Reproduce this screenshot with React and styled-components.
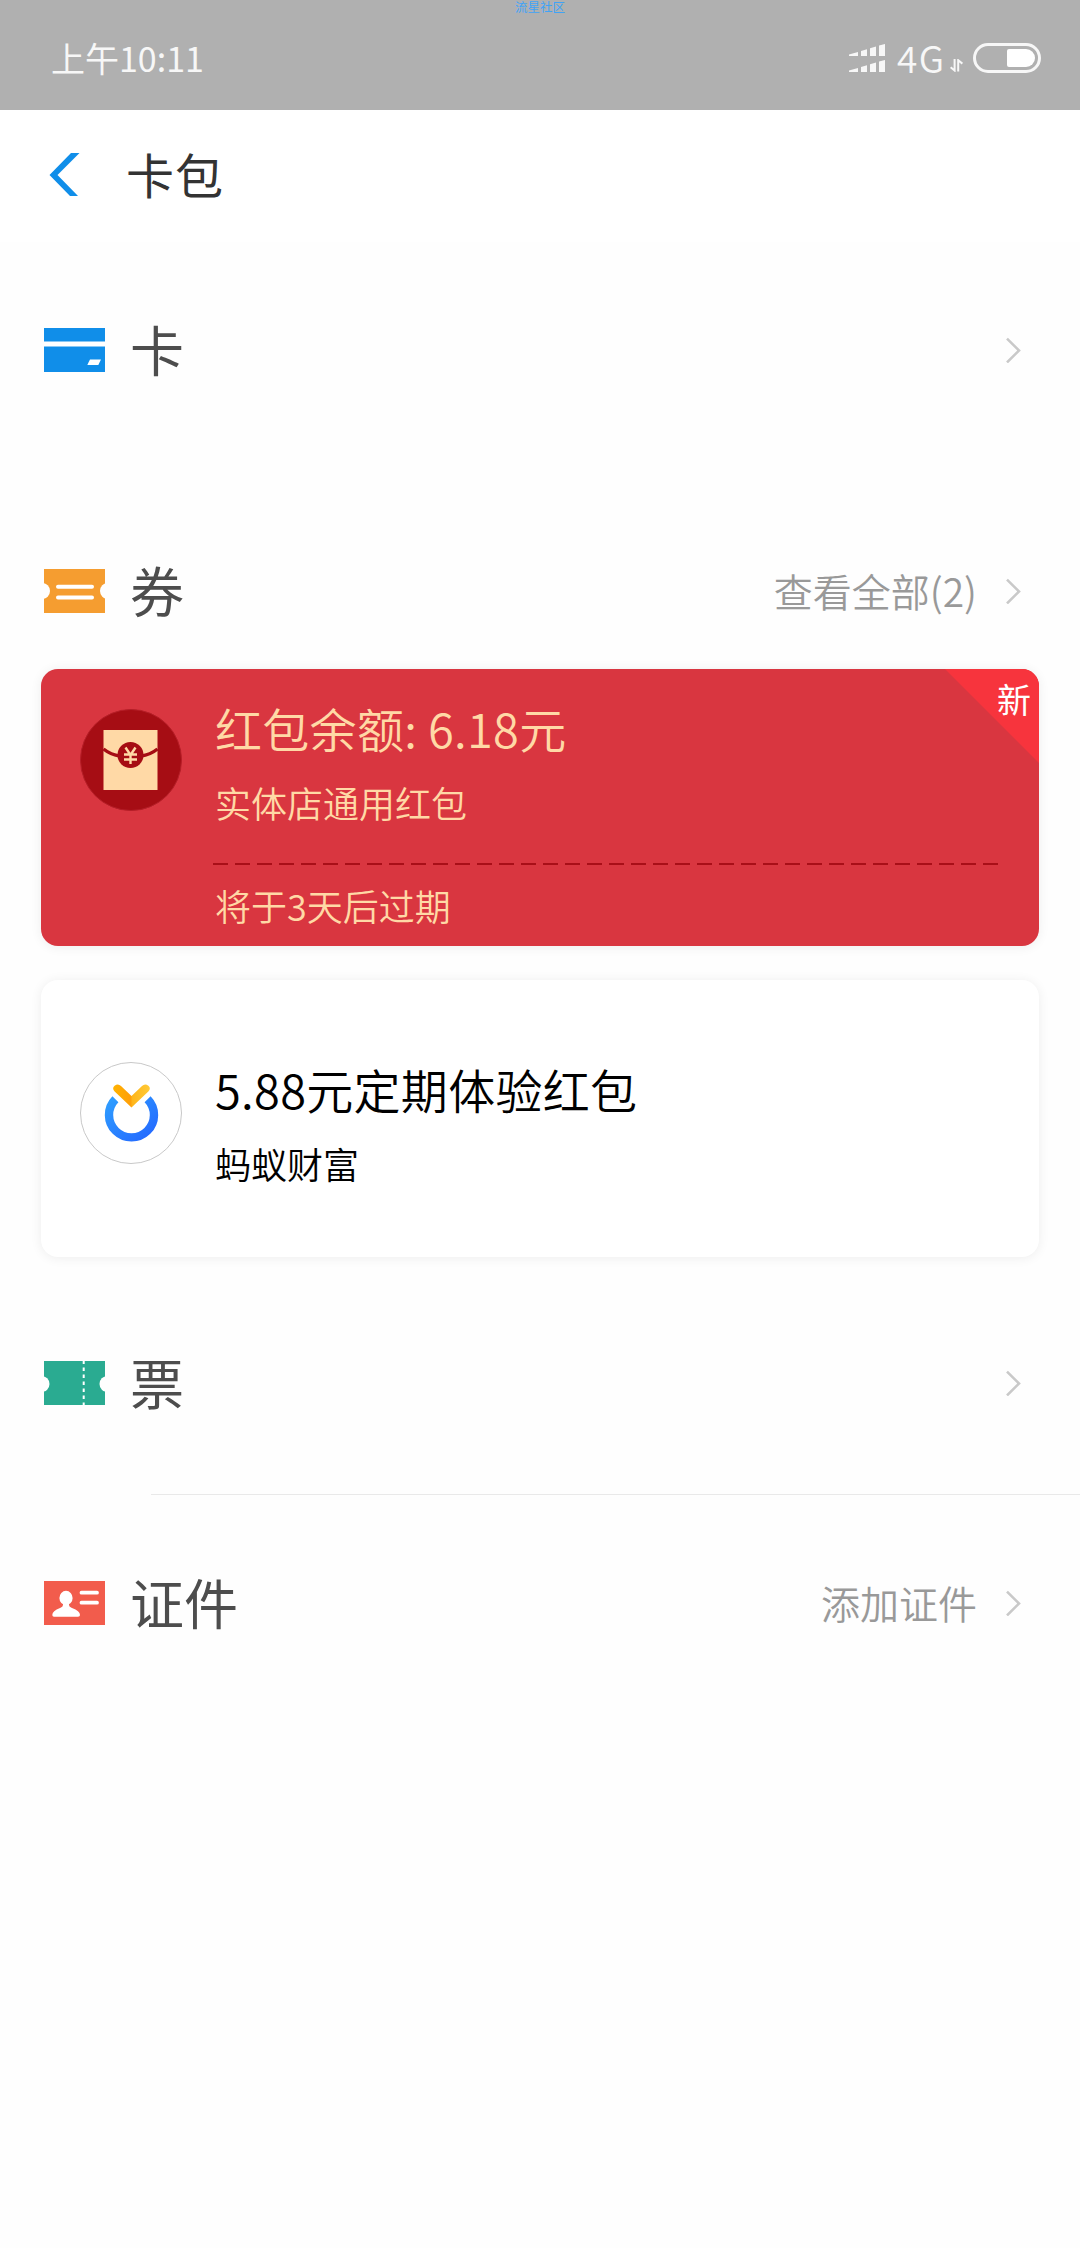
import React from 'react';
import styled, { createGlobalStyle } from 'styled-components';

const GlobalStyle = createGlobalStyle`
  * {
    box-sizing: border-box;
  }

  body {
    margin: 0;
    background: #fefefe;
    font-family: "Noto Sans CJK SC", "Noto Sans", sans-serif;
    font-weight: 400;
  }

  svg {
    display: block;
    flex-shrink: 0;
  }
`;

const Page = styled.div`
  position: relative;
  width: 1080px;
  height: 2248px;
  overflow: hidden;
`;

const Watermark = styled.span`
  position: absolute;
  top: 0;
  left: 0;
  width: 100%;
  text-align: center;
  font-size: 12.5px;
  line-height: 13px;
  color: #3fa3f7;
`;

const StatusBar = styled.div`
  display: flex;
  align-items: center;
  justify-content: space-between;
  height: 110px;
  padding: 6px 39px 0 51px;
  background: #b0b0b0;
  color: #f7f7f7;
  line-height: 1;
`;

const Clock = styled.span`
  font-size: 34px;
  font-weight: 400;
`;

const StatusIcons = styled.div`
  display: flex;
  align-items: center;
`;

const Network = styled.span`
  width: 53px;
  margin: 0 0 2px 12px;
  font-size: 37px;
  font-weight: 350;
  letter-spacing: 1.5px;
`;

const NavBar = styled.header`
  display: flex;
  align-items: center;
  gap: 46px;
  height: 132px;
  padding: 0 0 3px 49px;
  background: #fff;
`;

const NavTitle = styled.h1`
  margin: 0 0 3px;
  font-size: 48px;
  font-weight: 400;
  line-height: 1;
  letter-spacing: 1px;
  color: #333;
`;

const SectionRow = styled.section`
  display: flex;
  align-items: center;
  height: 110px;
  margin-top: ${(props) => props.$top}px;
  padding: 0 58px 0 44px;
`;

const SectionTitle = styled.h2`
  flex: 1;
  margin: 0 0 3px 25px;
  font-size: 54px;
  font-weight: 400;
  line-height: 1;
  color: #4d4d4d;
`;

const SectionLink = styled.span`
  margin: 0 29px 1px 0;
  font-size: 39px;
  font-weight: 350;
  line-height: 1;
  color: #999;
`;

const Divider = styled.hr`
  height: 1px;
  margin: 56px 0 0 151px;
  border: 0;
  background: #e9e9e9;
`;

const Coupon = styled.article`
  position: relative;
  display: flex;
  height: 277px;
  margin: ${(props) => props.$top}px 41px 0;
  padding: ${(props) => props.$padTop}px 42px 0 39px;
  border-radius: 17px;
  background: ${(props) => props.$bg};
  color: ${(props) => props.$color};
  box-shadow: 0 1px 12px rgba(0, 0, 0, 0.07);
  overflow: hidden;
`;

const CouponBody = styled.div`
  flex: 1;
  margin-left: 31px;
`;

const CouponTitle = styled.h3`
  margin: ${(props) => props.$top}px 0 0 2px;
  font-size: 47px;
  font-weight: 350;
  line-height: 47px;
  letter-spacing: 0.3px;
  white-space: nowrap;
`;

const CouponText = styled.p`
  margin: ${(props) => props.$top}px 0 0 2px;
  font-size: 36px;
  font-weight: 350;
  line-height: 36px;
`;

const DashedLine = styled.div`
  height: 2px;
  margin-top: 43px;
  width: 785px;
  background: repeating-linear-gradient(90deg, #a90f18 0 15px, transparent 15px 22px);
`;

const NewBadge = styled.div`
  position: absolute;
  top: 0;
  right: 0;
  width: 94px;
  height: 94px;
  padding: 13px 8px 0 0;
  background: #f7343d;
  clip-path: polygon(0 0, 100% 0, 100% 100%);
  color: #fff;
  font-size: 34px;
  line-height: 34px;
  font-weight: 400;
  text-align: right;
`;

const SignalIcon = () => (
  <svg width="36" height="28" viewBox="0 0 36 28" fill="#f7f7f7">
    {[0, 16].map((y) => (
      <g key={y} transform={`translate(0 ${y})`}>
        <path d="M0 10.5 L9 8 V12 H0Z" />
        <path d="M12 7 L18 5.2 V12 H12Z" />
        <path d="M21 4.2 L27 2.5 V12 H21Z" />
        <path d="M30 1.5 L36 0 V12 H30Z" />
      </g>
    ))}
  </svg>
);

const DataArrows = styled.svg`
  margin: 15px 10px 0 0;
`;

const DataIcon = () => (
  <DataArrows width="13" height="13" viewBox="0 0 13 13" fill="none" stroke="#f7f7f7" strokeWidth="2">
    <path d="M4.6 0 V11.5 L0.6 8.2" />
    <path d="M8.2 12.5 V1.2 L12.4 4.6" />
  </DataArrows>
);

const BatteryIcon = () => (
  <svg width="68" height="30" viewBox="0 0 68 30">
    <rect x="1.5" y="1.5" width="65" height="27" rx="13.5" fill="none" stroke="#f7f7f7" strokeWidth="3" />
    <path d="M36 6 H53 A9 9 0 0 1 53 24 H36 Q34 24 34 22 V8 Q34 6 36 6Z" fill="#fff" />
  </svg>
);

const BackIcon = () => (
  <svg width="31" height="43" viewBox="0 0 31 43">
    <path d="M22 0 H30.5 L8.5 22 L29 43 H21 L0.5 22Z" fill="#108ee9" />
  </svg>
);

const Chevron = () => (
  <svg width="16" height="26" viewBox="0 0 16 26">
    <path d="M1 1.6 L13 13.5 L1 25.4" fill="none" stroke="#c9c9c9" strokeWidth="2.6" />
  </svg>
);

const CardIcon = () => (
  <svg width="61" height="44" viewBox="0 0 61 44">
    <rect width="61" height="44" fill="#108ee9" />
    <rect y="13.5" width="61" height="5" fill="#fff" />
    <path d="M46 31.5 H57 L54.3 37 H43.3Z" fill="#fff" />
  </svg>
);

const CouponIcon = () => (
  <svg width="61" height="44" viewBox="0 0 61 44">
    <rect width="61" height="44" fill="#f59d30" />
    <circle cx="-2" cy="22" r="8" fill="#fefefe" />
    <circle cx="64" cy="22" r="8" fill="#fefefe" />
    <path d="M14 17.7 H48 M14 28.5 H48" stroke="#fff" strokeWidth="4" strokeLinecap="round" />
  </svg>
);

const TicketIcon = () => (
  <svg width="61" height="44" viewBox="0 0 61 44">
    <rect width="61" height="44" fill="#2aab91" />
    <circle cx="-2.5" cy="23" r="8" fill="#fefefe" />
    <circle cx="63.5" cy="23" r="8" fill="#fefefe" />
    <path d="M39.7 0 V44" stroke="#fff" strokeWidth="2" strokeDasharray="3.4 3.6" strokeDashoffset="0.4" />
  </svg>
);

const IdIcon = () => (
  <svg width="61" height="44" viewBox="0 0 61 44">
    <rect width="61" height="44" fill="#f25c4c" />
    <ellipse cx="22" cy="17" rx="6.6" ry="7.2" fill="#fff" />
    <path d="M19 21 H25 V24 Q25 26 28 27 Q36 30 36 34 Q36 35.8 34 35.8 H10 Q8.3 35.8 8.3 34 Q8.3 30 16 27 Q19 26 19 24Z" fill="#fff" />
    <path d="M37.5 11.7 H53 M37.5 21.7 H53" stroke="#fff" strokeWidth="3.8" strokeLinecap="round" />
  </svg>
);

const RedPacketIcon = () => (
  <svg width="102" height="102" viewBox="0 0 102 102">
    <circle cx="51" cy="51" r="50.5" fill="#a60d14" stroke="#b51f28" />
    <rect x="23.5" y="21" width="54" height="60" fill="#ffd9a6" />
    <path d="M23.5 40 Q31 46 40 47 M77.5 40 Q70 46 61 47" fill="none" stroke="#a60d14" strokeWidth="3.4" />
    <circle cx="50.5" cy="46" r="13" fill="#a60d14" />
    <path
      d="M45.5 38.5 L50.5 46 L55.5 38.5 M50.5 46 V55 M44 45.5 H57 M44 50.5 H57"
      fill="none"
      stroke="#ffd9a6"
      strokeWidth="2.4"
    />
  </svg>
);

const FortuneIcon = () => (
  <svg width="102" height="102" viewBox="0 0 102 102">
    <defs>
      <linearGradient id="ring" x1="0" y1="0" x2="1" y2="1">
        <stop offset="0" stopColor="#2e9dff" />
        <stop offset="1" stopColor="#2468ff" />
      </linearGradient>
      <linearGradient id="leaf" x1="0" y1="0" x2="1" y2="0">
        <stop offset="0" stopColor="#ffb300" />
        <stop offset="0.48" stopColor="#ff9f0a" />
        <stop offset="0.52" stopColor="#ffb61a" />
        <stop offset="1" stopColor="#ffca38" />
      </linearGradient>
    </defs>
    <circle cx="51" cy="51" r="50.5" fill="#fff" stroke="#c8c8c8" />
    <path d="M35.4 37.2 A22.5 22.5 0 1 0 67.6 37.2" fill="none" stroke="url(#ring)" strokeWidth="8.4" />
    <path
      d="M34.4 29.2 Q31.8 26.2 34.6 23.8 Q38 21 41 24 L51.5 34 L62 24 Q65 21 68.4 23.8 Q71.2 26.2 68.6 29.2 L51.5 45.5Z"
      fill="url(#leaf)"
    />
  </svg>
);

const App = () => {
  return (
    <>
      <GlobalStyle />
      <Page>
        <Watermark>流星社区</Watermark>
        <StatusBar>
          <Clock>上午10:11</Clock>
          <StatusIcons>
            <SignalIcon />
            <Network>4G</Network>
            <DataIcon />
            <BatteryIcon />
          </StatusIcons>
        </StatusBar>

        <NavBar>
          <BackIcon />
          <NavTitle>卡包</NavTitle>
        </NavBar>

        <SectionRow $top={53}>
          <CardIcon />
          <SectionTitle>卡</SectionTitle>
          <Chevron />
        </SectionRow>

        <SectionRow $top={131}>
          <CouponIcon />
          <SectionTitle>券</SectionTitle>
          <SectionLink>查看全部(2)</SectionLink>
          <Chevron />
        </SectionRow>

        <Coupon $top={23} $padTop={40} $bg="#d93640" $color="#ffd9a6">
          <RedPacketIcon />
          <CouponBody>
            <CouponTitle $top={-5}>红包余额: 6.18元</CouponTitle>
            <CouponText $top={33}>实体店通用红包</CouponText>
            <DashedLine />
            <CouponText $top={22}>将于3天后过期</CouponText>
          </CouponBody>
          <NewBadge>新</NewBadge>
        </Coupon>

        <Coupon $top={34} $padTop={82} $bg="#fff" $color="#000">
          <FortuneIcon />
          <CouponBody>
            <CouponTitle $top={3}>5.88元定期体验红包</CouponTitle>
            <CouponText $top={33}>蚂蚁财富</CouponText>
          </CouponBody>
        </Coupon>

        <SectionRow $top={71}>
          <TicketIcon />
          <SectionTitle>票</SectionTitle>
          <Chevron />
        </SectionRow>

        <Divider />

        <SectionRow $top={53}>
          <IdIcon />
          <SectionTitle>证件</SectionTitle>
          <SectionLink>添加证件</SectionLink>
          <Chevron />
        </SectionRow>
      </Page>
    </>
  );
};

export default App;
